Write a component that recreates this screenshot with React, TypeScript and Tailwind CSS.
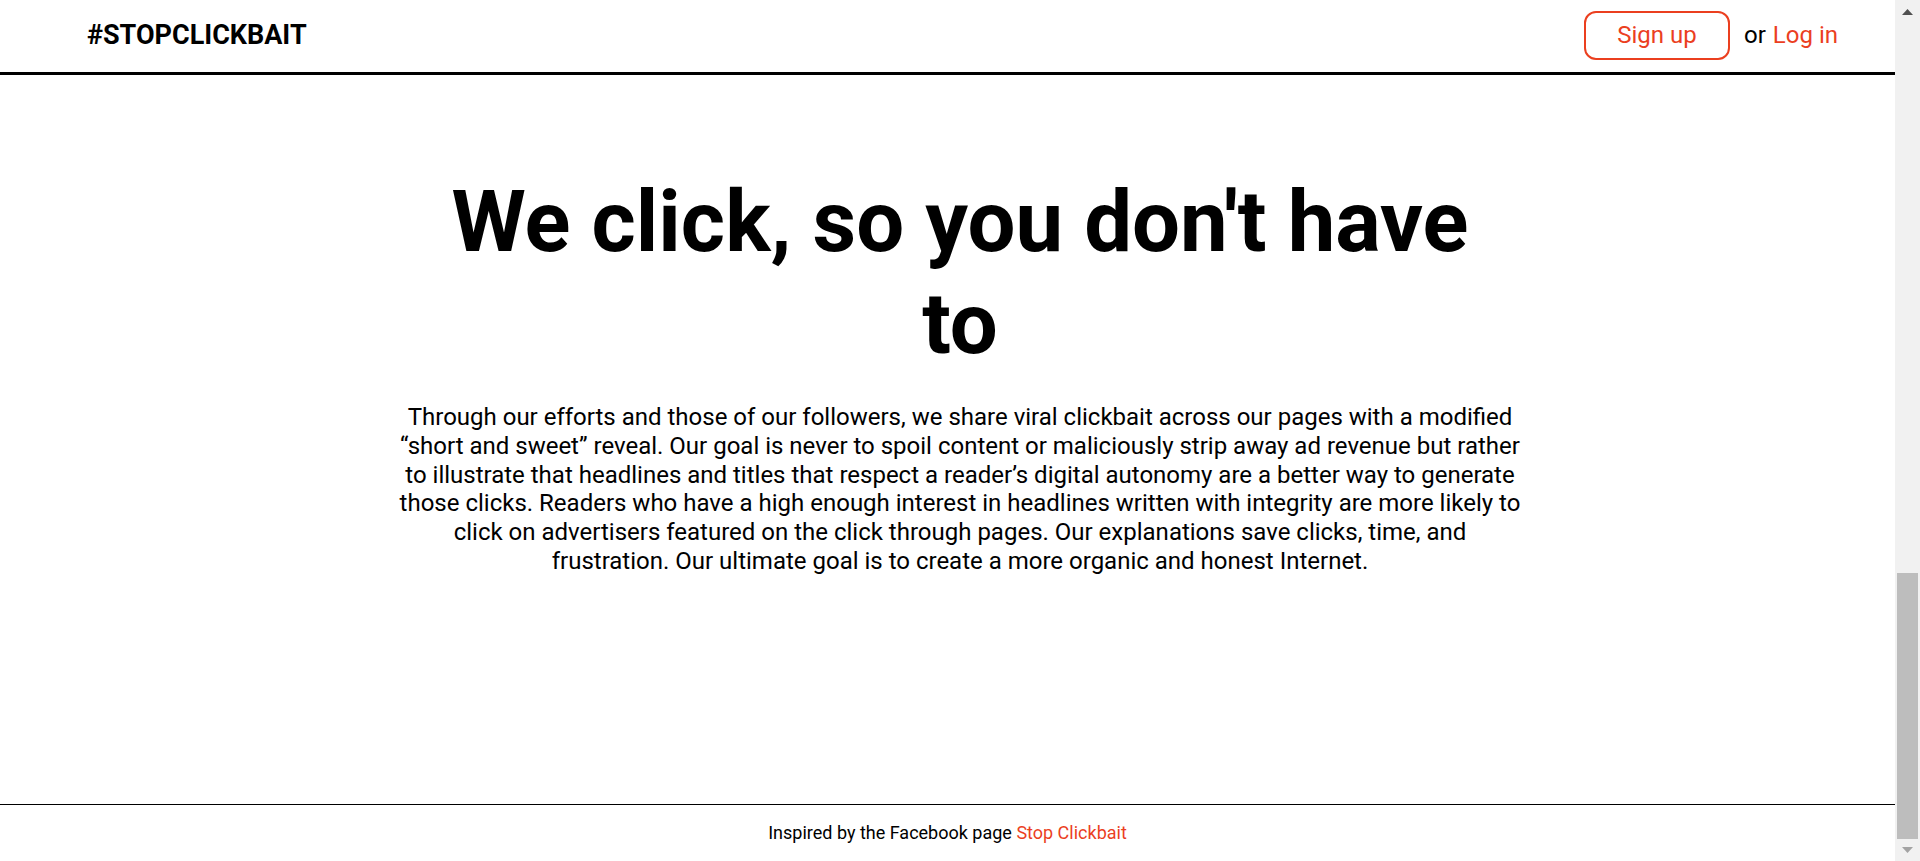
const Header = () => {
  return (
    <header className="bg-white w-full h-[75px] border-b-[3px] border-black">
      <nav className="flex h-full items-center justify-between pl-[87px] pr-[57px]">
        <h1 className="text-[27px] font-bold leading-none pb-[1px]">#STOPCLICKBAIT</h1>

        <div className="flex items-center text-[24px] leading-none pb-[2px]">
          <button className="flex items-center justify-center w-[146px] h-[49px] border-2 border-[#eb3f1f] rounded-[12px] text-[#eb3f1f]">
            Sign up
          </button>
          <span className="ml-[14px]">or</span>
          <a href="#" className="ml-[7px] text-[#eb3f1f]">
            Log in
          </a>
        </div>
      </nav>
    </header>
  );
};

const Hero = () => {
  return (
    <main className="flex-1 pt-[96px] pl-[25px] flex flex-col items-center">
      <h2 className="w-[1100px] text-center text-[85px] font-bold leading-[1.2]">
        We click, so you don't have to
      </h2>
      <p className="mt-[28px] w-[1130px] text-center text-[24px] leading-[1.2]">
        Through our efforts and those of our followers, we share viral clickbait across our pages with a
        modified “short and sweet” reveal. Our goal is never to spoil content or maliciously strip away ad
        revenue but rather to illustrate that headlines and titles that respect a reader’s digital autonomy
        are a better way to generate those clicks. Readers who have a high enough interest in headlines
        written with integrity are more likely to click on advertisers featured on the click through pages.
        Our explanations save clicks, time, and frustration. Our ultimate goal is to create a more organic
        and honest Internet.
      </p>
    </main>
  );
};

const Footer = () => {
  return (
    <footer className="h-[57px] border-t border-black flex items-center justify-center text-[18px] pb-[2px]">
      <p>
        Inspired by the Facebook page{" "}
        <a href="#" className="text-[#eb3f1f]">
          Stop Clickbait
        </a>
      </p>
    </footer>
  );
};

const Scrollbar = () => {
  return (
    <aside className="w-[25px] bg-[#f1f1f1] flex flex-col">
      <div className="h-[25px] flex items-start justify-center pt-[9px]">
        <svg width="11" height="6" viewBox="0 0 11 6">
          <polygon points="5.5,0 11,6 0,6" fill="#505050" />
        </svg>
      </div>
      <div className="flex-1 flex flex-col justify-end">
        <div className="h-[266px] mx-[2px] bg-[#bdbdbd]" />
      </div>
      <div className="h-[22px] flex items-start justify-center pt-[8px]">
        <svg width="11" height="6" viewBox="0 0 11 6">
          <polygon points="0,0 11,0 5.5,6" fill="#a3a3a3" />
        </svg>
      </div>
    </aside>
  );
};

export default function App() {
  return (
    <div className="flex h-[861px] bg-white text-black font-['Roboto',sans-serif]">
      <div className="flex-1 flex flex-col min-w-0">
        <Header />
        <Hero />
        <Footer />
      </div>
      <Scrollbar />
    </div>
  );
}
